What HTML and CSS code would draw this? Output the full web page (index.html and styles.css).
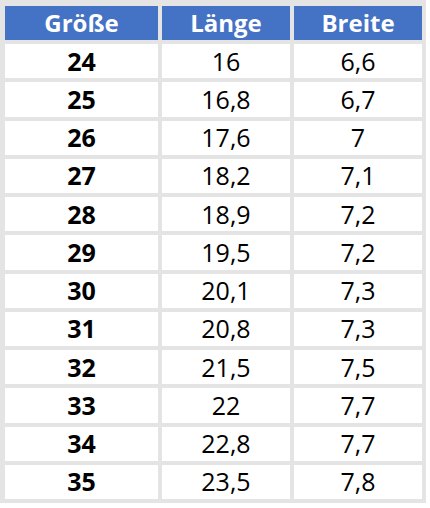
FILE: index.html
```html
<!DOCTYPE html>
<html lang="de">
<head>
<meta charset="utf-8">
<link rel="stylesheet" href="styles.css">
</head>
<body>
<div class="table">
  <div class="th">Größe</div><div class="th">Länge</div><div class="th">Breite</div>
  <div class="td size">24</div><div class="td">16</div><div class="td">6,6</div>
  <div class="td size">25</div><div class="td">16,8</div><div class="td">6,7</div>
  <div class="td size">26</div><div class="td">17,6</div><div class="td">7</div>
  <div class="td size">27</div><div class="td">18,2</div><div class="td">7,1</div>
  <div class="td size">28</div><div class="td">18,9</div><div class="td">7,2</div>
  <div class="td size">29</div><div class="td">19,5</div><div class="td">7,2</div>
  <div class="td size">30</div><div class="td">20,1</div><div class="td">7,3</div>
  <div class="td size">31</div><div class="td">20,8</div><div class="td">7,3</div>
  <div class="td size">32</div><div class="td">21,5</div><div class="td">7,5</div>
  <div class="td size">33</div><div class="td">22</div><div class="td">7,7</div>
  <div class="td size">34</div><div class="td">22,8</div><div class="td">7,7</div>
  <div class="td size">35</div><div class="td">23,5</div><div class="td">7,8</div>
</div>
</body>
</html>
```
FILE: styles.css
```css
html, body {
  margin: 0;
  padding: 0;
  background: #ffffff;
}
.table {
  box-sizing: border-box;
  width: 426px;
  height: 503px;
  padding: 6px 4px 4px 5px;
  background: #e4e4e4;
  display: grid;
  grid-template-columns: 153px 128px 128px;
  grid-template-rows: 34px repeat(12, 1fr);
  column-gap: 4px;
  row-gap: 4px;
  font-family: "Open Sans", "Liberation Sans", sans-serif;
}
.th, .td {
  display: flex;
  align-items: center;
  justify-content: center;
  line-height: 1;
}
.th {
  background: #4472c4;
  color: #ffffff;
  font-weight: 700;
  font-size: 24px;
}
.td {
  background: #ffffff;
  color: #000000;
  font-size: 25px;
}
.td.size {
  font-weight: 700;
}
```
